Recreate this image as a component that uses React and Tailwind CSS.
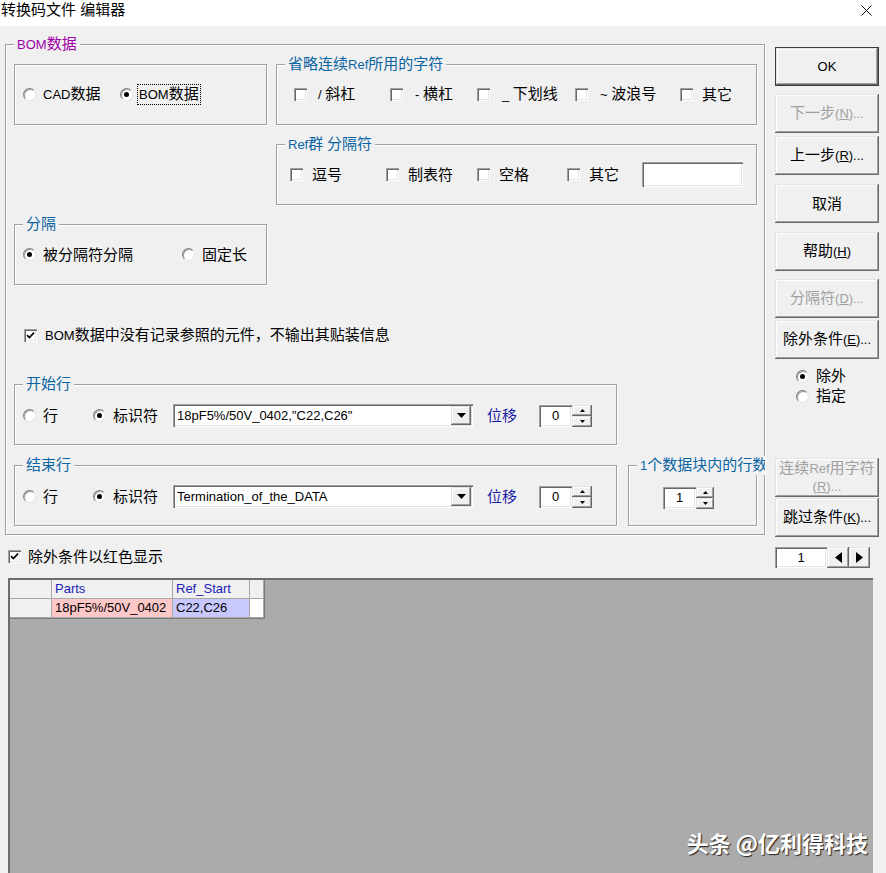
import React from "react";

const CJK = /([\u2e80-\u9fff\u3000-\u303f\uff00-\uffef]+)/;

// CJK runs keep the 15px base size, latin runs drop to 13px like the Tahoma UI font
function T({ s }) {
  return s.split(CJK).map((p, i) =>
    !p ? null : CJK.test(p) ? (
      <span key={i}>{p}</span>
    ) : (
      <span key={i} className="text-[13px]">
        {p}
      </span>
    )
  );
}

const raised =
  "bg-[#f0f0f0] shadow-[inset_-1px_-1px_0_#696969,inset_1px_1px_0_#e3e3e3,inset_-2px_-2px_0_#a0a0a0,inset_2px_2px_0_#ffffff]";
const sunken =
  "bg-white shadow-[inset_1px_1px_0_#a0a0a0,inset_2px_2px_0_#696969,inset_-1px_-1px_0_#ffffff,inset_-2px_-2px_0_#e3e3e3]";

function Group({ label, tone = "text-[#0a64a4]", clip = "", className = "", children }) {
  return (
    <div
      className={`relative shrink-0 border border-[#a0a0a0] shadow-[1px_1px_0_#ffffff,inset_1px_1px_0_#ffffff] ${className}`}
    >
      {label && (
        <span
          className={`absolute -top-[10px] left-[8px] bg-[#f0f0f0] pl-[3px] pr-[3px] leading-[18px] whitespace-nowrap ${tone} ${clip}`}
        >
          <T s={label} />
        </span>
      )}
      {children}
    </div>
  );
}

function Radio({ on }) {
  return (
    <span className="flex h-[13px] w-[13px] shrink-0 items-center justify-center rounded-full border border-t-[#808080] border-l-[#808080] border-b-[#e3e3e3] border-r-[#e3e3e3] bg-white shadow-[inset_1px_1px_0_#a0a0a0]">
      {on && <span className="h-[5px] w-[5px] rounded-full bg-black" />}
    </span>
  );
}

function Check({ on }) {
  return (
    <span className={`flex h-[13px] w-[13px] shrink-0 items-center justify-center ${sunken}`}>
      {on && (
        <svg width="9" height="9" viewBox="0 0 9 9">
          <path d="M1 4.2l2.4 2.4L8 1.6" fill="none" stroke="#000" strokeWidth="1.7" />
        </svg>
      )}
    </span>
  );
}

function CB({ label, className = "", gap = "ml-[10px]" }) {
  return (
    <div className={`flex items-center ${className}`}>
      <Check />
      <span className={`${gap} whitespace-nowrap`}>
        <T s={label} />
      </span>
    </div>
  );
}

function Btn({ children, disabled, def, className = "" }) {
  return (
    <div
      className={`flex h-[39px] w-[104px] shrink-0 flex-col items-center justify-center text-center ${raised} ${
        def ? "border border-[#3c3c3c]" : ""
      } ${disabled ? "text-[#a0a0a0]" : "text-black"} ${className}`}
    >
      {children}
    </div>
  );
}

function Combo({ value }) {
  return (
    <div className={`flex h-[23px] w-[300px] shrink-0 items-center pl-[4px] pr-[2px] ${sunken}`}>
      <span className="flex-1 whitespace-nowrap text-[13px]">{value}</span>
      <span className={`flex h-[19px] w-[20px] items-center justify-center ${raised}`}>
        <svg width="9" height="5" viewBox="0 0 9 5">
          <path d="M0 0h9L4.5 5z" fill="#000" />
        </svg>
      </span>
    </div>
  );
}

function Spin({ value, iw = "w-[33px]", aw = "w-[20px]" }) {
  return (
    <div className="flex h-[22px] shrink-0">
      <div className={`flex items-center justify-center text-[13px] ${iw} ${sunken}`}>{value}</div>
      <div className={`flex flex-col ${aw}`}>
        <span className={`flex h-[11px] items-center justify-center ${raised}`}>
          <svg width="5" height="3" viewBox="0 0 5 3">
            <path d="M0 3h5L2.5 0z" fill="#000" />
          </svg>
        </span>
        <span className={`flex h-[11px] items-center justify-center ${raised}`}>
          <svg width="5" height="3" viewBox="0 0 5 3">
            <path d="M0 0h5L2.5 3z" fill="#000" />
          </svg>
        </span>
      </div>
    </div>
  );
}

function RowBlock({ value }) {
  return (
    <div className="flex h-full items-center pl-[8px] pt-[2px]">
      <div className="flex w-[70px] items-center">
        <Radio />
        <span className="ml-[7px]">行</span>
      </div>
      <div className="flex w-[80px] items-center">
        <Radio on />
        <span className="ml-[7px]">标识符</span>
      </div>
      <Combo value={value} />
      <span className="ml-[14px] text-[#1a1aa8]">位移</span>
      <div className="ml-[22px]">
        <Spin value="0" />
      </div>
    </div>
  );
}

function Cell({ className = "", children }) {
  return (
    <div className={`flex h-full items-center border-r border-b border-[#a8a8a8] pl-[3px] text-[13px] whitespace-nowrap ${className}`}>
      {children}
    </div>
  );
}

export default function App() {
  return (
    <div className="h-[873px] w-[886px] overflow-hidden bg-[#f0f0f0] font-['Liberation_Sans','Noto_Sans_CJK_SC',sans-serif] text-[15px] leading-[18px] text-black">
      {/* title bar */}
      <div className="flex h-[26px] items-start justify-between bg-white pl-[1px] pr-[14px]">
        <span className="pt-[1px]">转换码文件 编辑器</span>
        <svg className="mt-[5px]" width="11" height="11" viewBox="0 0 11 11">
          <path d="M0.5 0.5l10 10M10.5 0.5l-10 10" stroke="#111" strokeWidth="1" />
        </svg>
      </div>

      <div className="flex items-start">
        <div className="flex flex-col">
          <Group label="BOM数据" tone="text-[#a000a8]" className="ml-[5px] mt-[18px] h-[491px] w-[760px] pl-[8px] pt-[19px]">
            <div className="flex">
              <div className="flex flex-col">
                <Group className="h-[61px] w-[253px]">
                  <div className="flex h-full items-center pl-[8px]">
                    <div className="flex w-[97px] items-center">
                      <Radio />
                      <span className="ml-[7px]">
                        <T s="CAD数据" />
                      </span>
                    </div>
                    <div className="flex items-center">
                      <Radio on />
                      <span className="ml-[5px] px-[1px] outline-1 outline-dotted outline-black">
                        <T s="BOM数据" />
                      </span>
                    </div>
                  </div>
                </Group>
                <Group label="分隔" className="mt-[99px] h-[61px] w-[253px]">
                  <div className="flex h-full items-center pl-[8px]">
                    <div className="flex w-[159px] items-center">
                      <Radio on />
                      <span className="ml-[7px]">被分隔符分隔</span>
                    </div>
                    <div className="flex items-center">
                      <Radio />
                      <span className="ml-[7px]">固定长</span>
                    </div>
                  </div>
                </Group>
              </div>

              <div className="ml-[9px] flex flex-col">
                <Group label="省略连续Ref所用的字符" className="h-[61px] w-[481px]">
                  <div className="flex h-full items-center pl-[17px]">
                    <CB label="/ 斜杠" className="w-[96px]" gap="ml-[11px]" />
                    <CB label="- 横杠" className="w-[87px]" gap="ml-[12px]" />
                    <CB label="_ 下划线" className="w-[98px]" gap="ml-[12px]" />
                    <CB label="~ 波浪号" className="w-[105px]" gap="ml-[12px]" />
                    <CB label="其它" gap="ml-[9px]" />
                  </div>
                </Group>
                <Group label="Ref群 分隔符" className="mt-[19px] h-[61px] w-[481px]">
                  <div className="flex h-full items-center pl-[13px]">
                    <CB label="逗号" className="w-[96px]" gap="ml-[9px]" />
                    <CB label="制表符" className="w-[91px]" gap="ml-[9px]" />
                    <CB label="空格" className="w-[90px]" gap="ml-[9px]" />
                    <CB label="其它" className="w-[75px]" gap="ml-[9px]" />
                    <div className={`h-[25px] w-[101px] ${sunken}`} />
                  </div>
                </Group>
              </div>
            </div>

            <div className="ml-[10px] mt-[43px] flex h-[15px] items-center">
              <Check on />
              <span className="ml-[8px] whitespace-nowrap">
                <T s="BOM数据中没有记录参照的元件，不输出其贴装信息" />
              </span>
            </div>

            <Group label="开始行" className="mt-[41px] h-[61px] w-[603px]">
              <RowBlock value={'18pF5%/50V_0402,"C22,C26"'} />
            </Group>

            <div className="mt-[20px] flex">
              <Group label="结束行" className="h-[61px] w-[603px]">
                <RowBlock value="Termination_of_the_DATA" />
              </Group>
              <Group label="1个数据块内的行数" clip="w-[128px] overflow-hidden" className="ml-[11px] h-[61px] w-[129px]">
                <div className="flex h-full items-center pl-[34px] pt-[4px]">
                  <Spin value="1" iw="w-[33px]" aw="w-[18px]" />
                </div>
              </Group>
            </div>
          </Group>

          <div className="ml-[8px] mt-[14px] flex h-[15px] items-center">
            <Check on />
            <span className="ml-[7px]">除外条件以红色显示</span>
          </div>
        </div>

        {/* button column */}
        <div className="ml-[10px] flex w-[104px] flex-col">
          <Btn def className="mt-[21px]">
            <span className="text-[13px]">OK</span>
          </Btn>
          <Btn disabled className="mt-[8px]">
            <span>
              下一步
              <span className="text-[13px]">
                (<u>N</u>)...
              </span>
            </span>
          </Btn>
          <Btn className="mt-[3px]">
            <span>
              上一步
              <span className="text-[13px]">
                (<u>R</u>)...
              </span>
            </span>
          </Btn>
          <Btn className="mt-[9px]">取消</Btn>
          <Btn className="mt-[9px]">
            <span>
              帮助
              <span className="text-[13px]">
                (<u>H</u>)
              </span>
            </span>
          </Btn>
          <Btn disabled className="mt-[8px]">
            <span>
              分隔符
              <span className="text-[13px]">
                (<u>D</u>)...
              </span>
            </span>
          </Btn>
          <Btn className="mt-[2px]">
            <span>
              除外条件
              <span className="text-[13px]">
                (<u>E</u>)...
              </span>
            </span>
          </Btn>
          <div className="mt-[7px] flex flex-col pl-[21px]">
            <div className="flex h-[20px] items-center">
              <Radio on />
              <span className="ml-[7px]">除外</span>
            </div>
            <div className="flex h-[20px] items-center">
              <Radio />
              <span className="ml-[7px]">指定</span>
            </div>
          </div>
          <Btn disabled className="mt-[52px]">
            <span>
              <T s="连续Ref用字符" />
            </span>
            <span className="text-[13px]">
              (<u>R</u>)...
            </span>
          </Btn>
          <Btn className="mt-[1px]">
            <span>
              跳过条件
              <span className="text-[13px]">
                (<u>K</u>)...
              </span>
            </span>
          </Btn>
          <div className="mt-[10px] flex h-[21px] w-[96px]">
            <div className={`flex w-[52px] items-center justify-center text-[13px] ${sunken}`}>1</div>
            <div className={`flex w-[22px] items-center justify-center ${raised}`}>
              <svg width="7" height="11" viewBox="0 0 7 11">
                <path d="M7 0v11L0 5.5z" fill="#000" />
              </svg>
            </div>
            <div className={`flex w-[21px] items-center justify-center ${raised}`}>
              <svg width="7" height="11" viewBox="0 0 7 11">
                <path d="M0 0v11l7-5.5z" fill="#000" />
              </svg>
            </div>
          </div>
        </div>
      </div>

      {/* data grid */}
      <div className="relative ml-[8px] mt-[10px] h-[295px] w-[865px] border-l-2 border-t-2 border-[#6d6d6d] bg-[#ababab]">
        <div className="flex w-max flex-col border-r border-b border-[#7a7a7a]">
          <div className="flex h-[19px]">
            <Cell className="w-[42px] bg-[#f0f0f0]" />
            <Cell className="w-[121px] bg-[#f0f0f0] text-[#2222bb]">Parts</Cell>
            <Cell className="w-[77px] bg-[#f0f0f0] text-[#2222bb]">Ref_Start</Cell>
            <Cell className="w-[14px] bg-[#f0f0f0]" />
          </div>
          <div className="flex h-[19px]">
            <Cell className="w-[42px] bg-[#f0f0f0]" />
            <Cell className="w-[121px] bg-[#ffc8c8]">18pF5%/50V_0402</Cell>
            <Cell className="w-[77px] bg-[#c8c8ff]">C22,C26</Cell>
            <Cell className="w-[14px] bg-white" />
          </div>
        </div>
        <span className="absolute right-[5px] top-[250px] font-['Noto_Sans_CJK_SC',sans-serif] text-[22px] leading-[24px] font-bold text-white [text-shadow:1px_1px_1px_#222]">
          头条 @亿利得科技
        </span>
      </div>
    </div>
  );
}
